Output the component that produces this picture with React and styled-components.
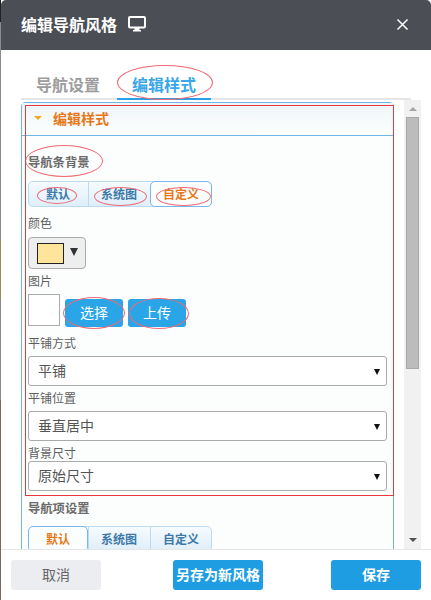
import React from 'react';
import styled, { createGlobalStyle } from 'styled-components';

const Global = createGlobalStyle`
  html, body { margin: 0; padding: 0; background: #fff; }
  body { font-family: "Noto Sans CJK SC", "Liberation Sans", sans-serif; }
  * { box-sizing: border-box; }
`;

const Page = styled.div`
  width: 431px;
  height: 600px;
  overflow: hidden;
  background:
    linear-gradient(#222 0 22px, #8c8c8c 22px 240px, #9a8d60 240px 300px, #8c8c8c 300px 400px, #7c6a58 400px 600px) left top / 1px 100% no-repeat,
    #fff;
  padding-left: 1px;
`;

const Dialog = styled.div`
  width: 430px;
  height: 600px;
  display: flex;
  flex-direction: column;
  background: #fff;
  border-radius: 5px;
  overflow: hidden;
`;

const Header = styled.div`
  height: 50px;
  flex: none;
  display: flex;
  align-items: center;
  padding: 0 22px 0 20px;
  background: #4b4e55;
  color: #fff;
`;

const HeaderTitle = styled.div`
  font-size: 16px;
  font-weight: 700;
  line-height: 50px;
  margin-top: -2px;
`;

const MonitorIcon = styled.svg`
  width: 18px;
  height: 16px;
  margin-left: 11px;
  margin-top: -2px;
`;

const CloseIcon = styled.svg`
  width: 13px;
  height: 13px;
  margin-left: auto;
  margin-top: -1px;
`;

const Tabs = styled.div`
  flex: none;
  display: flex;
  gap: 2px;
  height: 50px;
  width: 390px;
  margin-left: 20px;
  padding-top: 20px;
  border-bottom: 2px solid #e6e6e6;
`;

const Tab = styled.div`
  position: relative;
  height: 30px;
  padding: 0 15px;
  font-size: 16px;
  line-height: 28px;
  font-weight: 700;
  color: ${p => (p.$active ? '#3aa7e8' : '#9c9c9c')};
  border-bottom: 2px solid ${p => (p.$active ? '#2a9fe3' : 'transparent')};
`;

// the hand drawn red marks lying over the screenshot
const Ring = styled.span`
  position: absolute;
  top: ${p => p.$t}px;
  right: ${p => p.$r}px;
  bottom: ${p => p.$b}px;
  left: ${p => p.$l}px;
  border: 1px solid #ee6a74;
  border-radius: 50%;
  pointer-events: none;
`;

const RedFrame = styled.div`
  position: absolute;
  top: 2px;
  left: 3px;
  width: 369px;
  height: 391px;
  border: 1px solid #e5393f;
  pointer-events: none;
`;

const Main = styled.div`
  flex: 1;
  min-height: 0;
  display: flex;
  overflow: hidden;
`;

const Panel = styled.div`
  position: relative;
  width: 373px;
  height: 470px;
  flex: none;
  margin: 2px 0 0 20px;
  border: 1px solid #6fb6e6;
  border-radius: 4px 4px 0 0;
  background: #fcfefe;
`;

const PanelTitle = styled.div`
  height: 33px;
  display: flex;
  align-items: center;
  padding: 0 0 2px 12px;
  gap: 11px;
  border-bottom: 1px solid #6fb6e6;
  background: linear-gradient(#eef5f8, #fdfefe);
  color: #e5791a;
  font-size: 14px;
  font-weight: 700;
`;

const Caret = styled.i`
  width: 0;
  height: 0;
  border-left: 4px solid transparent;
  border-right: 4px solid transparent;
  border-top: 4px solid #f0aa1e;
`;

const PanelBody = styled.div`
  display: flex;
  flex-direction: column;
  align-items: flex-start;
  padding: 16px 6px 0;
`;

const SectionLabel = styled.div`
  position: relative;
  margin-top: ${p => p.$top || 0}px;
  font-size: 12.3px;
  line-height: 20px;
  font-weight: 700;
  color: #6b6b6b;
`;

const Label = styled.div`
  margin-top: ${p => p.$top}px;
  font-size: 12px;
  line-height: 16px;
  color: #5f5f5f;
`;

const Segments = styled.div`
  display: flex;
  height: 26px;
  margin-top: ${p => p.$top}px;
  border: 1px solid #bcdaf0;
  border-radius: 5px;
  background: linear-gradient(#f6fbfe, #dfeefa);
`;

const Segment = styled.div`
  position: relative;
  width: ${p => p.$w}px;
  margin: -1px 0;
  font-size: 12px;
  font-weight: 700;
  line-height: 23px;
  text-align: center;
  color: ${p => (p.$active ? '#e5791a' : '#3c79a9')};
  background: ${p => (p.$active ? '#fcfefe' : 'transparent')};
  border: 1px solid ${p => (p.$active ? '#78b7e8' : 'transparent')};
  border-left-color: ${p => (p.$active ? '#78b7e8' : '#bcdaf0')};
  border-radius: ${p => (p.$active ? '5px' : '0')};
  &:first-child { border-left-color: ${p => (p.$active ? '#78b7e8' : 'transparent')}; margin-left: -1px; }
  &:last-child { margin-right: -1px; }
`;

const ColorButton = styled.button`
  width: 58px;
  height: 32px;
  margin-top: 6px;
  padding: 0 0 0 8px;
  display: flex;
  align-items: center;
  gap: 6px;
  border: 1px solid #aaa;
  border-radius: 4px;
  background: #eee;
`;

const Swatch = styled.span`
  width: 27px;
  height: 21px;
  border: 1px solid #222;
  background: #ffe49b;
`;

const ColorCaret = styled.i`
  width: 0;
  height: 0;
  margin-top: -2px;
  border-left: 4px solid transparent;
  border-right: 4px solid transparent;
  border-top: 8px solid #333;
`;

const PictureRow = styled.div`
  display: flex;
  align-items: flex-start;
  margin-top: 5px;
`;

const PictureBox = styled.div`
  width: 32px;
  height: 32px;
  border: 1px solid #aaa;
  background: #fff;
`;

const BlueButton = styled.button`
  position: relative;
  width: 58px;
  height: 28px;
  margin: 5px 0 0 ${p => p.$left}px;
  padding: 0 0 2px;
  border: 0;
  border-radius: 3px;
  background: #2aa6e8;
  color: #fff;
  font: 14px/26px "Noto Sans CJK SC", sans-serif;
`;

const SelectWrap = styled.div`
  position: relative;
  width: 359px;
  margin-top: ${p => p.$top}px;
  &::after {
    content: '';
    position: absolute;
    right: 7px;
    top: 13px;
    border-left: 3px solid transparent;
    border-right: 3px solid transparent;
    border-top: 6px solid #111;
  }
`;

const Select = styled.select`
  display: block;
  width: 100%;
  height: 30px;
  padding: 0 0 2px 9px;
  appearance: none;
  border: 1px solid #aaa;
  border-radius: 3px;
  background: #fff;
  color: #555;
  font: 14px "Noto Sans CJK SC", sans-serif;
`;

const Scrollbar = styled.div`
  width: 17px;
  height: 449px;
  flex: none;
  margin-left: 10px;
  padding: 7px 2px;
  display: flex;
  flex-direction: column;
  align-items: center;
  background: #f1f1f1;
`;

const ArrowUp = styled.i`
  flex: none;
  border-left: 4px solid transparent;
  border-right: 4px solid transparent;
  border-bottom: 4px solid #a6a6a6;
`;

const ArrowDown = styled.i`
  flex: none;
  margin-top: auto;
  border-left: 4px solid transparent;
  border-right: 4px solid transparent;
  border-top: 4px solid #505050;
`;

const Thumb = styled.div`
  flex: none;
  width: 13px;
  height: 252px;
  margin-top: 6px;
  border: 1px solid #a8a8a8;
  background: #bcbcbc;
`;

const Footer = styled.div`
  height: 51px;
  flex: none;
  display: flex;
  justify-content: space-between;
  align-items: flex-start;
  padding: 10px 10px 0;
  border-top: 1px solid #e6e6e6;
  background: #fff;
`;

const FooterButton = styled.button`
  width: 90px;
  height: 30px;
  margin-left: ${p => p.$left || 0}px;
  padding: 0 0 2px;
  border: 0;
  border-radius: 3px;
  background: ${p => (p.$primary ? '#1f9de3' : '#ecedf0')};
  color: ${p => (p.$primary ? '#fff' : '#666')};
  font: ${p => (p.$primary ? 700 : 400)} 14px/28px "Noto Sans CJK SC", sans-serif;
  white-space: nowrap;
`;

const Fields = [
  { label: '平铺方式', labelTop: 8, top: 5, value: '平铺' },
  { label: '平铺位置', labelTop: 4, top: 5, value: '垂直居中' },
  { label: '背景尺寸', labelTop: 4, top: 0, value: '原始尺寸' },
];

export default function App() {
  return (
    <Page>
      <Global />
      <Dialog>
        <Header>
          <HeaderTitle>编辑导航风格</HeaderTitle>
          <MonitorIcon viewBox="0 0 18 16">
            <rect x="1" y="1" width="16" height="10.5" rx="1" fill="none" stroke="#fff" strokeWidth="2" />
            <rect x="6.5" y="12" width="5" height="2" fill="#fff" />
            <rect x="5" y="14" width="8" height="1.5" fill="#fff" />
          </MonitorIcon>
          <CloseIcon viewBox="0 0 13 13">
            <path d="M1.5 1.5 L11.5 11.5 M11.5 1.5 L1.5 11.5" stroke="#fff" strokeWidth="1.5" fill="none" />
          </CloseIcon>
        </Header>
        <Tabs>
          <Tab>导航设置</Tab>
          <Tab $active>
            编辑样式
            <Ring $t={-5} $r={-2} $b={-2} $l={0} />
          </Tab>
        </Tabs>
        <Main>
          <Panel>
            <PanelTitle>
              <Caret />
              编辑样式
            </PanelTitle>
            <PanelBody>
              <SectionLabel>
                导航条背景
                <Ring $t={-7} $r={-13} $b={-5} $l={-3} />
              </SectionLabel>
              <Segments $top={9}>
                <Segment $w={60}>
                  默认
                  <Ring $t={5} $r={10} $b={2} $l={8} />
                </Segment>
                <Segment $w={62}>
                  系统图
                  <Ring $t={5} $r={2} $b={0} $l={5} />
                </Segment>
                <Segment $w={62} $active>
                  自定义
                  <Ring $t={5} $r={0} $b={0} $l={5} />
                </Segment>
              </Segments>
              <Label $top={8}>颜色</Label>
              <ColorButton>
                <Swatch />
                <ColorCaret />
              </ColorButton>
              <Label $top={4}>图片</Label>
              <PictureRow>
                <PictureBox />
                <BlueButton $left={5}>
                  选择
                  <Ring $t={-2} $r={-2} $b={-2} $l={-2} />
                </BlueButton>
                <BlueButton $left={5}>
                  上传
                  <Ring $t={-1} $r={-3} $b={-2} $l={1} />
                </BlueButton>
              </PictureRow>
              {Fields.map(f => (
                <React.Fragment key={f.label}>
                  <Label $top={f.labelTop}>{f.label}</Label>
                  <SelectWrap $top={f.top}>
                    <Select defaultValue={f.value}>
                      <option>{f.value}</option>
                    </Select>
                  </SelectWrap>
                </React.Fragment>
              ))}
              <SectionLabel $top={7}>导航项设置</SectionLabel>
              <Segments $top={8}>
                <Segment $w={60} $active>默认</Segment>
                <Segment $w={62}>系统图</Segment>
                <Segment $w={62}>自定义</Segment>
              </Segments>
            </PanelBody>
            <RedFrame />
          </Panel>
          <Scrollbar>
            <ArrowUp />
            <Thumb />
            <ArrowDown />
          </Scrollbar>
        </Main>
        <Footer>
          <FooterButton>取消</FooterButton>
          <FooterButton $primary $left={4}>另存为新风格</FooterButton>
          <FooterButton $primary>保存</FooterButton>
        </Footer>
      </Dialog>
    </Page>
  );
}
